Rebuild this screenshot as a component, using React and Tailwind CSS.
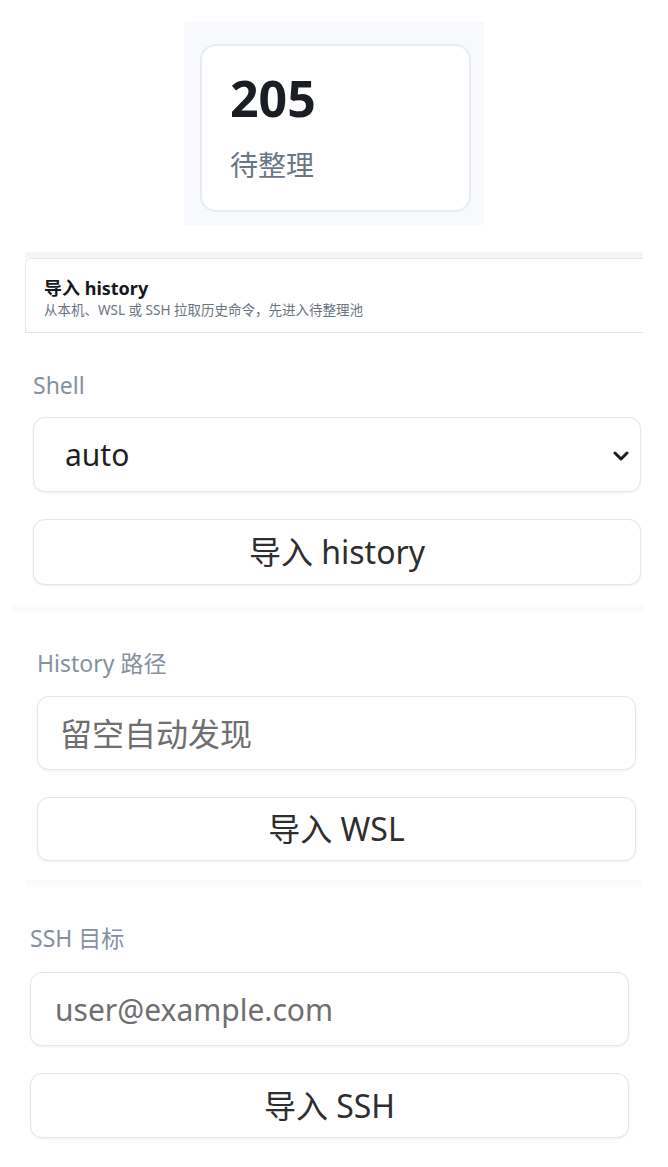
const font = { fontFamily: '"Noto Sans", "Noto Sans CJK SC", sans-serif' };

const fieldBox =
  "w-full rounded-xl border border-[#e4e6ea] bg-white shadow-[0_1px_2px_rgba(15,23,42,0.07)]";

function StatCard() {
  return (
    <div className="flex justify-center pt-[22px]">
      <div className="w-[300px] bg-[#f8f9fc] pb-[13px] pl-[16px] pr-[13px] pt-[22px]">
        <div className="h-[168px] rounded-2xl border-2 border-[#e8ebf0] bg-white pl-[28px] pt-[27px]">
          <div className="text-[50px] font-bold leading-none text-[#1a1d24]">205</div>
          <div className="mt-[28px] text-[28px] leading-none text-[#6b7685]">待整理</div>
        </div>
      </div>
    </div>
  );
}

function ImportHeader() {
  return (
    <div className="mt-[27px] pl-[25px] pr-[25px]">
      <div className="h-[6px] bg-[#f4f5f9]" />
      <div className="rounded-tl-md border-b border-l border-t border-[#e3e6ec] bg-white pb-[13px] pl-[18px] pt-[17px]">
        <div className="text-[18px] font-bold leading-[24px] text-[#14171c]">导入 history</div>
        <div className="mt-px text-[13.5px] leading-[18px] text-[#6b7380]">
          从本机、WSL 或 SSH 拉取历史命令，先进入待整理池
        </div>
      </div>
    </div>
  );
}

function Label({ children }) {
  return <div className="text-[23px] leading-[30px] text-[#8591a1]">{children}</div>;
}

function ActionButton({ children, height }) {
  return (
    <button
      type="button"
      className={`${fieldBox} ${height} mt-[27px] flex items-center justify-center text-[32px] leading-none text-[#2e2e2e]`}
    >
      {children}
    </button>
  );
}

function Divider({ inset }) {
  return <div className={`h-[7px] bg-[#fafbfd] ${inset}`} />;
}

function Chevron() {
  return (
    <svg
      viewBox="0 0 16 10"
      className="pointer-events-none absolute right-[11px] top-[33px] h-[10px] w-[16px]"
      fill="none"
      stroke="#1c1c1c"
      strokeWidth="3"
      strokeLinecap="round"
      strokeLinejoin="round"
    >
      <path d="M2 2l6 6 6-6" />
    </svg>
  );
}

export default function App() {
  return (
    <div className="min-h-[1167px] bg-white" style={font}>
      <StatCard />
      <ImportHeader />

      {/* Shell picker */}
      <section className="pl-[33px] pr-[27px] pt-[37px]">
        <Label>Shell</Label>
        <div className={`${fieldBox} relative mt-[17px] h-[75px]`}>
          <select
            defaultValue="auto"
            className="h-full w-full appearance-none bg-transparent pl-[31px] text-[30px] text-[#1f1f1f] outline-none"
          >
            <option value="auto">auto</option>
            <option value="bash">bash</option>
            <option value="zsh">zsh</option>
            <option value="fish">fish</option>
          </select>
          <Chevron />
        </div>
        <ActionButton height="h-[66px]">导入 history</ActionButton>
      </section>

      <div className="pt-[20px]">
        <Divider inset="ml-[12px] mr-[25px]" />
      </div>

      {/* WSL import */}
      <section className="pl-[37px] pr-[32px] pt-[36px]">
        <Label>History 路径</Label>
        <input
          placeholder="留空自动发现"
          className={`${fieldBox} mt-[18px] h-[74px] pl-[22px] text-[32px] text-[#222] outline-none placeholder:text-[#6f6f6f]`}
        />
        <ActionButton height="h-[64px]">导入 WSL</ActionButton>
      </section>

      <div className="pt-[19px]">
        <Divider inset="ml-[25px] mr-[25px]" />
      </div>

      {/* SSH import */}
      <section className="pb-[29px] pl-[30px] pr-[39px] pt-[36px]">
        <Label>SSH 目标</Label>
        <input
          placeholder="user@example.com"
          className={`${fieldBox} mt-[19px] h-[74px] pl-[24px] text-[30px] text-[#222] outline-none placeholder:text-[#6f6f6f]`}
        />
        <ActionButton height="h-[65px]">导入 SSH</ActionButton>
      </section>
    </div>
  );
}
